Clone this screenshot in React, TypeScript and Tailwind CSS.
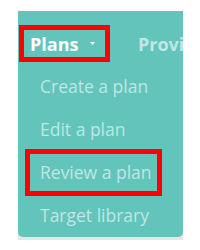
export default function App() {
	const items = ["Create a plan", "Edit a plan", "Review a plan", "Target library"];

	return (
		<div className="h-[250px] w-[200px] bg-white pt-[11px] pl-[18px] font-['Open_Sans',sans-serif]">
			<div className="w-[165px] bg-[#e6e6e6] pb-[3px]">
				<div className="overflow-hidden rounded-b-[5px] bg-[#63c4bc]">
					<div className="flex h-[51px] items-end pl-[1px]">
						<div className="flex h-[37px] w-[91px] shrink-0 items-center border-[5px] border-[#ff0000] pl-[6px]">
							<span className="text-[18px] font-bold leading-none text-white">Plans</span>
							<svg className="ml-[12px]" width="5" height="3" viewBox="0 0 5 3">
								<path d="M0 0h5L2.5 3z" fill="#ffffff" />
							</svg>
						</div>
						<div className="flex h-[37px] items-center pl-[28px]">
							<span className="whitespace-nowrap text-[18px] font-bold leading-none text-[#bfe8e4]">Provi</span>
						</div>
					</div>
					<ul className="pt-[3px]">
						{items.map((label) =>
							label === "Review a plan" ? (
								<li
									key={label}
									className="-my-[2px] ml-[7px] flex h-[47px] w-[137px] items-center border-[5px] border-[#ff0000] pl-[10px] text-[17.5px] text-[#bfe7e3]"
								>
									{label}
								</li>
							) : (
								<li key={label} className="flex h-[43px] items-center pl-[22px] text-[17.5px] text-[#bfe7e3]">
									{label}
								</li>
							)
						)}
					</ul>
				</div>
			</div>
		</div>
	);
}
